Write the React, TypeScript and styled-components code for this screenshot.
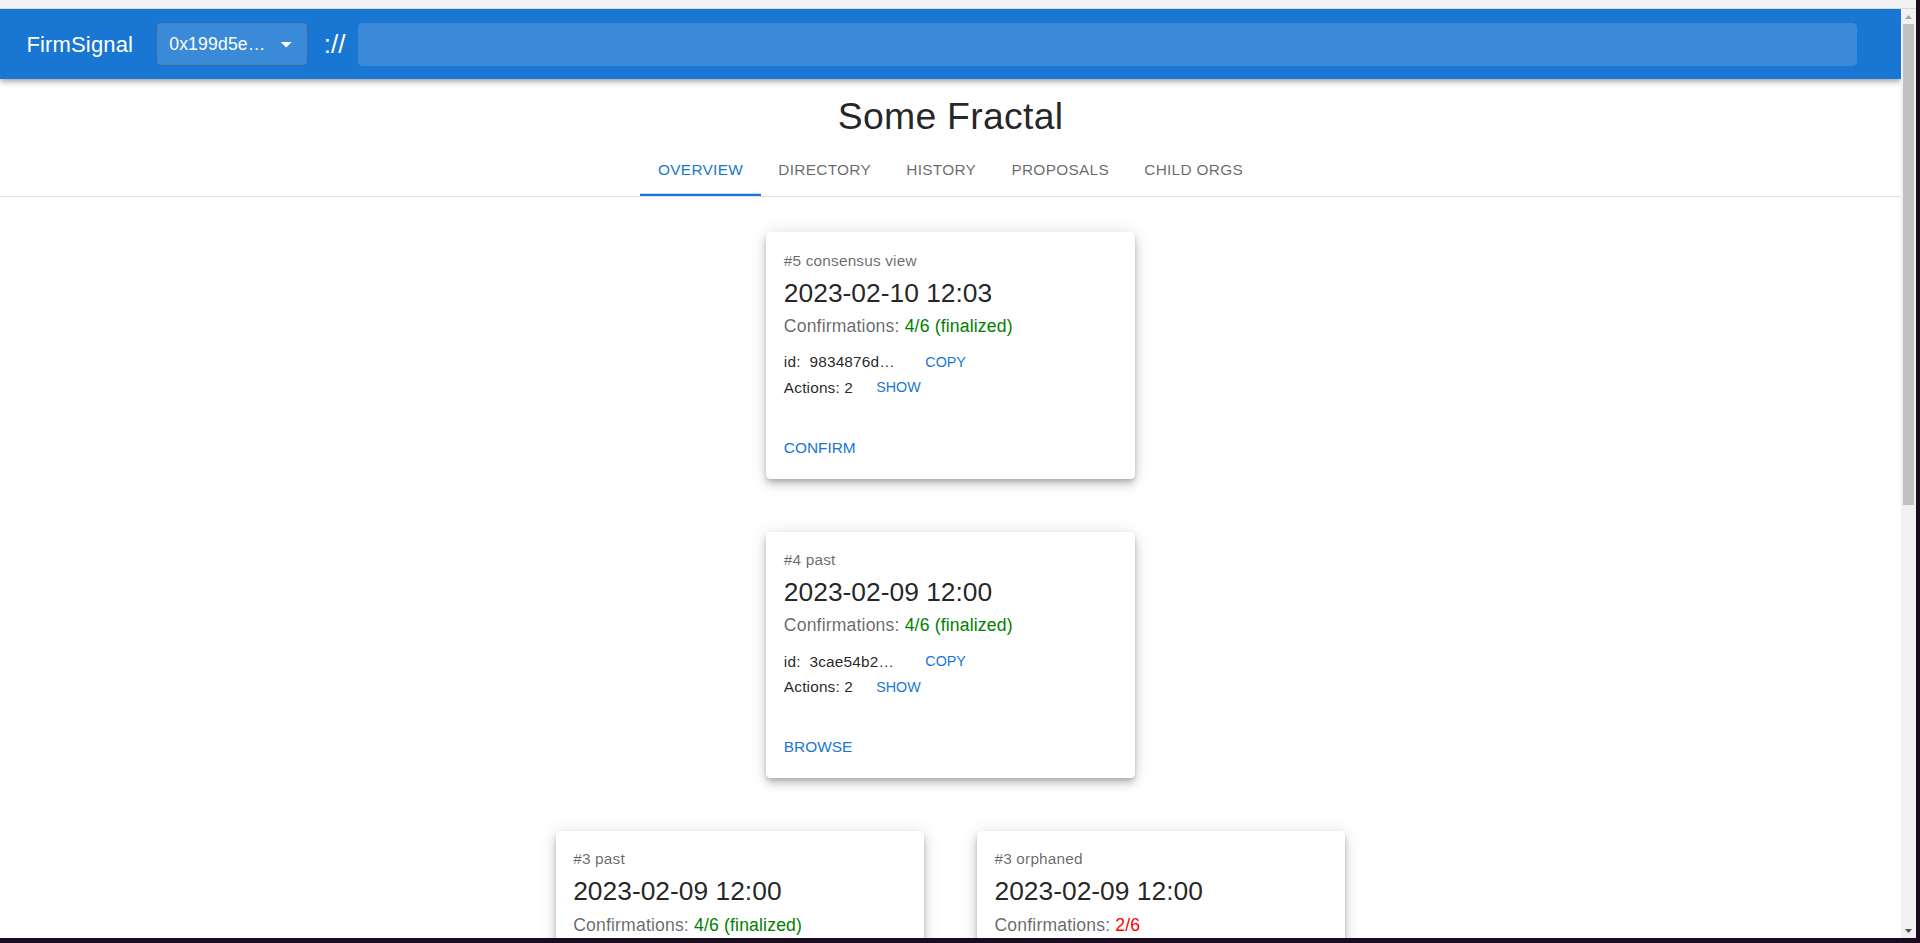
import React from 'react';
import styled, { createGlobalStyle } from 'styled-components';

const GlobalStyle = createGlobalStyle`
  html, body {
    margin: 0;
    padding: 0;
    overflow: hidden;
    background: #1a0b1e;
    font-family: "Liberation Sans", Arial, sans-serif;
  }
  * {
    box-sizing: border-box;
  }
`;

const Screen = styled.div`
  width: 1920px;
  height: 943px;
  background: #1a0b1e;
`;

const Window = styled.div`
  width: 1916px;
  height: 938px;
  display: flex;
  flex-direction: column;
  background: #fff;
  overflow: hidden;
`;

const BrowserStrip = styled.div`
  flex-shrink: 0;
  height: 9px;
  background: #f2f2f2;
  border-bottom: 1px solid #d9d9d9;
`;

const Viewport = styled.div`
  flex: 1;
  min-height: 0;
  display: flex;
`;

const Page = styled.div`
  flex: 1;
  min-width: 0;
  overflow: hidden;
  display: flex;
  flex-direction: column;
`;

const ScrollTrack = styled.div`
  width: 15px;
  flex-shrink: 0;
  background: #f1f1f1;
  display: flex;
  flex-direction: column;
  align-items: center;
`;

const ScrollArrow = styled.div`
  height: 15px;
  width: 15px;
  display: flex;
  align-items: center;
  justify-content: center;
`;

const ScrollThumb = styled.div`
  width: 11px;
  height: 481px;
  background: #c1c1c1;
`;

const ScrollSpacer = styled.div`
  flex: 1;
`;

const AppBar = styled.header`
  position: relative;
  z-index: 1;
  flex-shrink: 0;
  height: 70.4px;
  padding: 0 26.4px;
  display: flex;
  align-items: center;
  background: #1976d2;
  color: #fff;
  box-shadow: 0px 2px 4px -1px rgba(0, 0, 0, 0.2), 0px 4px 5px 0px rgba(0, 0, 0, 0.14),
    0px 1px 10px 0px rgba(0, 0, 0, 0.12);
`;

const Brand = styled.div`
  font-size: 22px;
  line-height: 1.6;
  letter-spacing: 0.0075em;
`;

const AccountSelect = styled.div`
  margin-left: 22.5px;
  width: 152px;
  height: 44px;
  padding: 0 7px 0 12.5px;
  display: flex;
  align-items: center;
  justify-content: space-between;
  font-size: 17.6px;
  letter-spacing: 0.00938em;
  background: rgba(255, 255, 255, 0.15);
  border: 1px solid rgba(0, 0, 0, 0.22);
  border-radius: 4.4px;
`;

const Separator = styled.span`
  margin: 0 13px 0 16px;
  font-size: 26px;
  font-weight: 400;
`;

const UrlInput = styled.input`
  flex: 1;
  height: 43px;
  margin-right: 17.6px;
  padding: 0 12px;
  border: none;
  outline: none;
  border-radius: 4.4px;
  background: rgba(255, 255, 255, 0.15);
  color: #fff;
  font: inherit;
  font-size: 17.6px;
`;

const Title = styled.h1`
  margin: 14px 0 0;
  text-align: center;
  font-size: 37.4px;
  line-height: 1.235;
  font-weight: 400;
  letter-spacing: 0.00735em;
  color: rgba(0, 0, 0, 0.87);
`;

const TabBar = styled.nav`
  flex-shrink: 0;
  margin-top: 3.5px;
  display: flex;
  justify-content: center;
  border-bottom: 1px solid #e0e0e0;
`;

const Tab = styled.button<{ $active?: boolean }>`
  min-width: 99px;
  height: 52.8px;
  padding: 0 17.6px;
  border: none;
  background: none;
  font-family: inherit;
  font-size: 15.4px;
  line-height: 1.25;
  letter-spacing: 0.3px;
  text-transform: uppercase;
  color: ${(p) => (p.$active ? '#1976d2' : 'rgba(0, 0, 0, 0.6)')};
  box-shadow: ${(p) => (p.$active ? 'inset 0 -2.2px 0 #1976d2' : 'none')};
`;

const Tree = styled.main`
  padding-top: 35.5px;
  display: flex;
  flex-direction: column;
  align-items: center;
  gap: 52.8px;
`;

const Row = styled.div`
  display: flex;
  gap: 52.8px;
`;

const Card = styled.section`
  flex-shrink: 0;
  width: 368.5px;
  background: #fff;
  border-radius: 4.4px;
  box-shadow: 0px 3px 5px -1px rgba(0, 0, 0, 0.2), 0px 6px 10px 0px rgba(0, 0, 0, 0.14),
    0px 1px 18px 0px rgba(0, 0, 0, 0.12);
`;

const CardBody = styled.div`
  padding: 17.6px 17.6px 18.5px;
`;

const Overline = styled.div`
  margin-bottom: 3.6px;
  font-size: 15.4px;
  line-height: 22px;
  letter-spacing: 0.01071em;
  color: rgba(0, 0, 0, 0.6);
`;

const DateText = styled.div`
  font-size: 26.4px;
  line-height: 35.2px;
  color: rgba(0, 0, 0, 0.87);
`;

const Confirmations = styled.div`
  margin: 2.5px 0 10px;
  font-size: 17.6px;
  line-height: 26.4px;
  letter-spacing: 0.00938em;
  color: rgba(0, 0, 0, 0.6);
`;

const Status = styled.span<{ $ok: boolean }>`
  color: ${(p) => (p.$ok ? '#008000' : '#ff0000')};
`;

const MetaRow = styled.div`
  height: 25.5px;
  display: flex;
  align-items: center;
  font-size: 15.4px;
  letter-spacing: 0.01071em;
  color: rgba(0, 0, 0, 0.87);
`;

const IdText = styled.span`
  width: 136px;
  white-space: pre;
`;

const ActionsText = styled.span`
  margin-right: 17.6px;
`;

const SmallButton = styled.button`
  padding: 0 5.5px;
  border: none;
  background: none;
  font-family: inherit;
  font-size: 14.3px;
  line-height: 25px;
  text-transform: uppercase;
  color: #1976d2;
`;

const CardActions = styled.div`
  padding: 8.8px 8.8px 10.6px;
  display: flex;
`;

const TextButton = styled.button`
  padding: 6.6px 8.8px;
  border: none;
  background: none;
  font-family: inherit;
  font-size: 15.4px;
  line-height: 26.95px;
  text-transform: uppercase;
  color: #1976d2;
`;

type Block = {
  label: string;
  date: string;
  confirmations: string;
  ok: boolean;
  id: string;
  actions: number;
  action: string;
};

const blocks: Block[][] = [
  [
    {
      label: '#5 consensus view',
      date: '2023-02-10 12:03',
      confirmations: '4/6 (finalized)',
      ok: true,
      id: '9834876d…',
      actions: 2,
      action: 'Confirm',
    },
  ],
  [
    {
      label: '#4 past',
      date: '2023-02-09 12:00',
      confirmations: '4/6 (finalized)',
      ok: true,
      id: '3cae54b2…',
      actions: 2,
      action: 'Browse',
    },
  ],
  [
    {
      label: '#3 past',
      date: '2023-02-09 12:00',
      confirmations: '4/6 (finalized)',
      ok: true,
      id: 'a17f03c9…',
      actions: 1,
      action: 'Browse',
    },
    {
      label: '#3 orphaned',
      date: '2023-02-09 12:00',
      confirmations: '2/6',
      ok: false,
      id: '5e0b9d21…',
      actions: 1,
      action: 'Browse',
    },
  ],
];

const tabs = ['Overview', 'Directory', 'History', 'Proposals', 'Child orgs'];

const BlockCard = ({ block }: { block: Block }) => (
  <Card>
    <CardBody>
      <Overline>{block.label}</Overline>
      <DateText>{block.date}</DateText>
      <Confirmations>
        Confirmations: <Status $ok={block.ok}>{block.confirmations}</Status>
      </Confirmations>
      <MetaRow>
        <IdText>{`id:  ${block.id}`}</IdText>
        <SmallButton>Copy</SmallButton>
      </MetaRow>
      <MetaRow>
        <ActionsText>Actions: {block.actions}</ActionsText>
        <SmallButton>Show</SmallButton>
      </MetaRow>
    </CardBody>
    <CardActions>
      <TextButton>{block.action}</TextButton>
    </CardActions>
  </Card>
);

const App = () => {
  return (
    <Screen>
      <GlobalStyle />
      <Window>
        <BrowserStrip />
        <Viewport>
          <Page>
            <AppBar>
              <Brand>FirmSignal</Brand>
              <AccountSelect>
                <span>0x199d5e…</span>
                <svg width="26.4" height="26.4" viewBox="0 0 24 24" fill="#fff">
                  <path d="M7 10l5 5 5-5z" />
                </svg>
              </AccountSelect>
              <Separator>://</Separator>
              <UrlInput readOnly value="" />
            </AppBar>
            <Title>Some Fractal</Title>
            <TabBar>
              {tabs.map((t, i) => (
                <Tab key={t} $active={i === 0}>
                  {t}
                </Tab>
              ))}
            </TabBar>
            <Tree>
              {blocks.map((row, i) => (
                <Row key={i}>
                  {row.map((b) => (
                    <BlockCard key={b.label} block={b} />
                  ))}
                </Row>
              ))}
            </Tree>
          </Page>
          <ScrollTrack>
            <ScrollArrow>
              <svg width="7" height="4" viewBox="0 0 7 4">
                <polygon points="0,4 3.5,0 7,4" fill="#a3a3a3" />
              </svg>
            </ScrollArrow>
            <ScrollThumb />
            <ScrollSpacer />
            <ScrollArrow>
              <svg width="7" height="4" viewBox="0 0 7 4">
                <polygon points="0,0 3.5,4 7,0" fill="#505050" />
              </svg>
            </ScrollArrow>
          </ScrollTrack>
        </Viewport>
      </Window>
    </Screen>
  );
};

export default App;
